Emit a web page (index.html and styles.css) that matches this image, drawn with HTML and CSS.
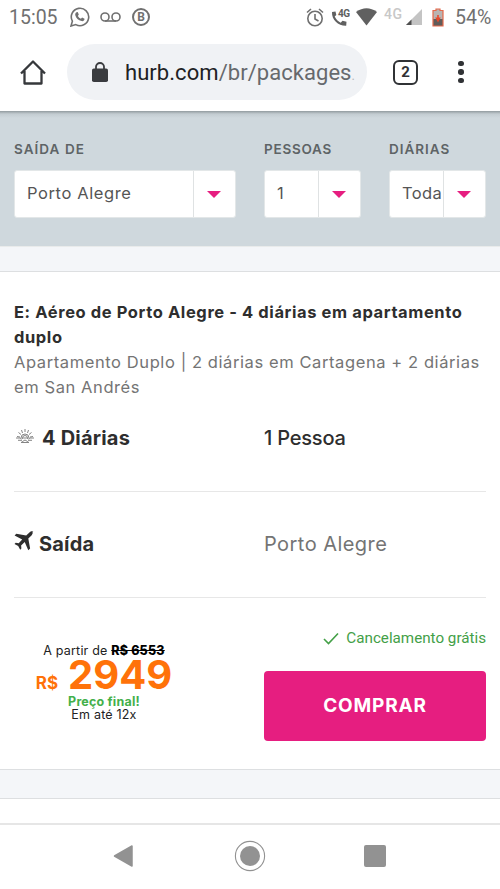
FILE: index.html
```html
<!DOCTYPE html>
<html lang="pt-BR">
<head>
<meta charset="utf-8">
<title>Hurb</title>
<link rel="stylesheet" href="styles.css">
</head>
<body>
<div class="status">
  <span class="clock">15:05</span>
  <svg class="i-wa" width="20" height="20" viewBox="0 0 20 20" fill="none" stroke="#707070" stroke-width="1.6"><path d="M1 19l1.400-4.800A8.700 8.700 0 1 1 5.800 17.600z"/><path d="M6.500 5.200l1.200-.1 1.100 2.500-.9 1.300c.7 1.300 1.700 2.200 3 2.800l1.200-1.100 2.400 1.200c.2 1.800-1.500 2.600-2.900 2.300-3.300-.7-5.600-3-6.300-5.900-.3-1.200.2-2.500 1.200-3z" fill="#707070" stroke="none"/></svg>
  <svg class="i-vm" width="21" height="10" viewBox="0 0 21 10" fill="none" stroke="#707070" stroke-width="1.600"><circle cx="5" cy="5" r="4"/><circle cx="16" cy="5" r="4"/><path d="M5 9h11"/></svg>
  <span class="i-b">B</span>
  <svg class="i-alarm" width="18" height="19" viewBox="0 0 18 19" fill="none" stroke="#707070" stroke-width="1.600"><circle cx="9" cy="10.500" r="7.200"/><path d="M9 6v5l3.500 2M1 4.500l4-3.500M17 4.500L13 1"/></svg>
  <svg class="i-call" width="19" height="19" viewBox="0 0 19 19"><path d="M1 4l3.500-.5.8 3.500-1.600 1.600c1.500 3 3.200 4.700 6 6.100l1.800-1.900 4 .9-.3 4C7.500 18 .5 12 1 4z" fill="#606060"/><text x="7" y="9" class="call-label">4G</text></svg>
  <svg class="i-wifi" width="21" height="18" viewBox="0 0 21 18"><path d="M0 4Q10.500-3.500 21 4L10.500 17.500z" fill="#606060"/></svg>
  <span class="net">4G</span>
  <svg class="i-signal" width="16" height="16" viewBox="0 0 16 16"><path d="M0 16L16 0v16z" fill="#c4c4c4"/><path d="M0 16l5.500-5.500V16z" fill="#505050"/></svg>
  <svg class="i-batt" width="12" height="19" viewBox="0 0 12 19"><path d="M4 1h4v1.500h3V18H1V2.500h3z" fill="#b9b4b2"/><path d="M1 11h10v7H1z" fill="#605c5a"/><path d="M4 1h4v1.500h3V18H1V2.500h3z" fill="none" stroke="#e5694b" stroke-width="1.200"/><path d="M5.200 7h1.600v2.500h2L6 14.500 3.200 9.500h2z" fill="#e8492c"/></svg>
  <span class="pct">54%</span>
</div>
<div class="toolbar">
  <svg class="home" width="26" height="27" viewBox="0 0 26 27" fill="none" stroke="#36383b" stroke-width="2.300"><path d="M1 14.500L13 2.500l12 12M4.500 12v12.500h17V12" stroke-linejoin="round"/></svg>
  <div class="omnibox">
    <svg width="16" height="20" viewBox="0 0 16 20"><rect y="6.500" width="16" height="13.500" rx="1.800" fill="#3a3c3f"/><path d="M4 7V4.800a4 3.800 0 0 1 8 0V7" fill="none" stroke="#3a3c3f" stroke-width="1.800"/></svg>
    <span class="url"><b>hurb.com</b>/br/packages</span><i class="cut">.</i>
  </div>
  <span class="tabs">2</span>
  <div class="menu"><i></i><i></i><i></i></div>
</div>
<div class="filters">
  <div class="field from"><label>SAÍDA DE</label><div class="select"><span>Porto Alegre</span><div class="arrow"><i></i></div></div></div>
  <div class="field people"><label>PESSOAS</label><div class="select"><span>1</span><div class="arrow"><i></i></div></div></div>
  <div class="field nights"><label>DIÁRIAS</label><div class="select"><span>Toda</span><div class="arrow"><i></i></div></div></div>
</div>
<div class="gap gap-top"></div>
<div class="card">
  <h2>E: Aéreo de Porto Alegre - 4 diárias em apartamento<br>duplo</h2>
  <p class="desc">Apartamento Duplo | 2 diárias em Cartagena + 2 diárias<br>em San Andrés</p>
  <div class="row row-nights">
    <div class="key">
      <svg class="sun" width="18" height="14" viewBox="0 0 18 14" fill="none" stroke="#666" stroke-width=".8"><path d="M5 9a4 4 0 1 1 8 0M6.500 9a2.500 2.500 0 0 1 5 0M9 0v3M5.500 1l1 3M12.500 1l-1 3M2.500 3.500L5 5.500M15.500 3.500L13 5.500M1 7.500l3 .5M17 7.500L14 8M0 9h4l1.500 1 1.700-1h3.600l1.700 1L14 9h4M2 11.300h3l1.500 1.200L9 11l2.500 1.500 1.500-1.200h3M5 13.500h8"/></svg>
      <span class="k1">4 Diárias</span>
    </div>
    <span class="people-val">1 Pessoa</span>
  </div>
  <div class="row row-from">
    <div class="key">
      <svg class="plane" width="20" height="21" viewBox="0 0 20 21"><path d="M19.300.7c-.9-.9-2.800-.3-3.900.8l-3.200 3.100L2.300 2.700.6 4.500l7.600 4-3.500 3.700-3-.4L.5 13l3.700 2 2 3.700 1.200-1.200-.3-3 3.600-3.400 3.600 8.200 1.800-1.700-1.800-10.100 3.200-3.100c1.100-1.100 1.600-2.900.8-3.700z" fill="#2e2e2e"/></svg>
      <span class="k2">Saída</span>
    </div>
    <span class="from-val">Porto Alegre</span>
  </div>
  <div class="buy-row">
    <div class="price">
      <div class="old">A partir de <s>R$ 6553</s></div>
      <div class="now"><small>R$</small><span>2949</span></div>
      <div class="final">Preço final!</div>
      <div class="inst">Em até 12x</div>
    </div>
    <div class="action">
      <div class="cancel"><svg width="16" height="13" viewBox="0 0 16 13" fill="none" stroke="#43a047" stroke-width="1.600"><path d="M1 7l4.500 4.500L15 1.500"/></svg><span>Cancelamento grátis</span></div>
      <div class="button">COMPRAR</div>
    </div>
  </div>
</div>
<div class="gap gap-bottom"></div>
<div class="next"></div>
<div class="nav">
  <svg width="20" height="24" viewBox="0 0 20 24"><path d="M1.500 12L19 2v20z" fill="#929292" stroke="#929292" stroke-width="1.500" stroke-linejoin="round"/></svg>
  <svg width="32" height="32" viewBox="0 0 32 32"><circle cx="16" cy="16" r="14.600" fill="none" stroke="#929292" stroke-width="1.100"/><circle cx="16" cy="16" r="10" fill="#929292"/></svg>
  <i class="recent"></i>
</div>
</body>
</html>
```
FILE: styles.css
```css
* { box-sizing: border-box; }
body { margin: 0; width: 500px; height: 889px; overflow: hidden; background: #fff; font-family: Inter, "Liberation Sans", sans-serif; color: #2e2e2e; white-space: nowrap; }
svg { display: block; flex: none; }
i { font-style: normal; }

.status { height: 34px; display: flex; align-items: center; font-family: Roboto, sans-serif; color: #707070; }
.clock { width: 49px; margin-left: 9px; font-size: 19.500px; }
.i-wa { margin-left: 12px; }
.i-vm { margin-left: 10px; }
.i-b { width: 18px; height: 18px; margin-left: 11px; border: 2px solid #707070; border-radius: 50%; font: bold 12px/14px Roboto, sans-serif; text-align: center; }
.i-alarm { margin-left: 156px; }
.i-call { margin-left: 7px; }
.call-label { font: bold 10px Roboto, sans-serif; letter-spacing: -.6px; fill: #606060; }
.i-wifi { margin-left: 6px; }
.net { width: 19px; margin: -6px 0 0 7px; font-size: 14px; font-weight: 500; letter-spacing: .6px; color: #c8c8c8; }
.i-signal { margin-left: 3px; }
.i-batt { margin-left: 10px; }
.pct { margin-left: 11px; font-size: 19.500px; }

.toolbar { height: 77px; display: flex; align-items: center; padding: 0 0 1px 20px; font-family: Roboto, sans-serif; }
.omnibox { width: 300px; height: 56px; margin-left: 21px; padding-left: 25px; border-radius: 28px; background: #f0f2f5; display: flex; align-items: center; }
.url { margin: 0 0 0 17px; font-size: 22px; letter-spacing: .05px; color: #66696d; }
.url b { font-weight: 400; color: #202124; }
.cut { margin-top: 6px; font-size: 13px; color: #b5b8bb; }
.tabs { width: 25px; height: 25px; margin-left: 26px; border: 2.500px solid #303235; border-radius: 6px; font-size: 15px; font-weight: 700; line-height: 21px; text-align: center; color: #303235; }
.menu { display: grid; gap: 3px; margin-left: 40px; }
.menu i { width: 5.500px; height: 5.500px; border-radius: 50%; background: #303235; }

.filters { height: 135px; display: flex; padding: 30px 0 0 14px; background: linear-gradient(#929b9f, #c3ccd1 3px, #cfd8dd 7px); }
.field label { display: block; height: 29px; font-size: 13.500px; line-height: 17px; font-weight: 600; color: #5e6466; }
.from label { letter-spacing: 1.050px; }
.people label { letter-spacing: .75px; }
.nights label { letter-spacing: 1px; }
.from { width: 222px; }
.people { width: 97px; margin-left: 28px; }
.nights { width: 97px; margin-left: 28px; }
.select { display: flex; height: 48px; border: 1px solid #e3e7e8; border-radius: 3px; background: #fff; }
.select span { flex: 1; padding-left: 12px; overflow: hidden; font-size: 16.500px; line-height: 45px; letter-spacing: .6px; color: #555; }
.nights .select span { letter-spacing: .4px; }
.arrow { width: 42px; border-left: 1px solid #dfe2e3; display: grid; place-items: center; padding-right: 2px; }
.arrow i { border: 7px solid transparent; border-top: 7px solid #e61e80; border-bottom: 0; }

.gap { background: #f4f6f9; border: solid #dddfe1; border-width: 1px 0; }
.gap-top { height: 26px; border-top-color: #e9ebeb; }
.card { height: 497px; padding: 28px 14px 0; }
h2 { margin: 0; font-size: 16.500px; line-height: 25px; font-weight: 700; letter-spacing: .6px; }
.desc { margin: 0; font-size: 16.500px; line-height: 25px; letter-spacing: .59px; color: #747474; }
.row { display: grid; grid-template-columns: 250px 1fr; border-bottom: 1px solid #e7e7e7; font-size: 20px; line-height: 26px; }
.row-nights { height: 92px; padding-top: 25px; }
.row-from { height: 106px; padding-top: 39px; }
.key { display: flex; font-weight: 700; letter-spacing: .2px; }
.sun { margin: 4px 8px 0 2px; }
.plane { margin: 0 5px 0 0; }
.people-val { font-weight: 500; letter-spacing: -.2px; }
.from-val { color: #747474; letter-spacing: .45px; }

.buy-row { display: grid; grid-template-columns: 250px 222px; }
.price { width: 180px; padding-top: 46px; text-align: center; color: #222; }
.old, .inst, .final { font-size: 12.500px; line-height: 14px; letter-spacing: .2px; }
.old s { font-weight: 800; color: #000; }
.now { height: 37px; display: flex; align-items: baseline; justify-content: center; font-weight: 700; color: #ff7209; line-height: 34px; }
.now small { margin-right: 10px; font-size: 17px; }
.now span { font-size: 40px; }
.final { font-weight: 700; color: #43b04a; line-height: 13px; }
.inst { line-height: 13px; }
.action { padding-top: 30px; }
.cancel { display: flex; align-items: center; justify-content: flex-end; height: 20px; font: 15.200px Roboto, sans-serif; color: #43a047; }
.cancel span { margin-left: 7px; }
.button { height: 70px; margin-top: 23px; border-radius: 4px; background: #e61e80; color: #fff; font-size: 19px; line-height: 69px; font-weight: 700; letter-spacing: .8px; text-align: center; }

.gap-bottom { height: 30px; }
.next { height: 26px; border-bottom: 2px solid #e6e6e6; }
.nav { height: 64px; display: flex; align-items: center; padding: 0 0 2px 113px; }
.nav svg + svg { margin-left: 101px; }
.recent { width: 22px; height: 22px; margin-left: 98px; border-radius: 2px; background: #929292; }
```
